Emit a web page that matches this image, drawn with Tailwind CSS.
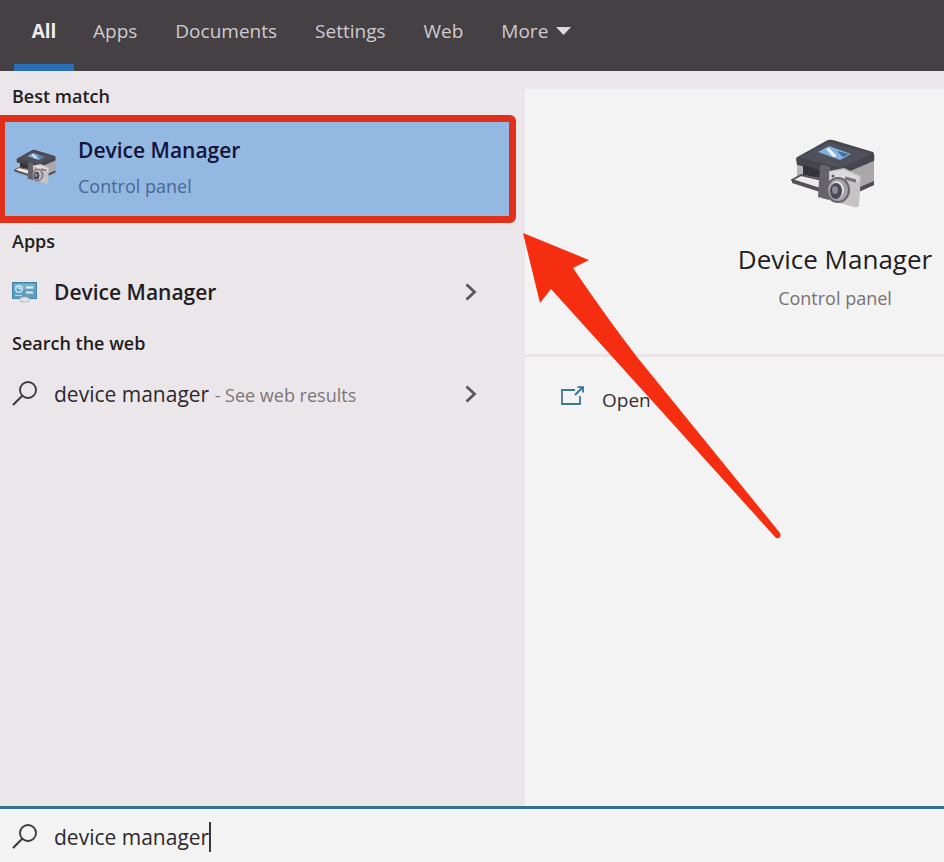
<!DOCTYPE html>
<html lang="en">
<head>
    <meta charset="UTF-8">
    <meta name="viewport" content="width=device-width, initial-scale=1.0">
    <title>Search</title>
    <script src="https://cdn.jsdelivr.net/npm/@tailwindcss/browser@4"></script>
</head>
<body class="relative flex flex-col min-h-screen overflow-x-hidden bg-[#ebe6ea] text-[#1f1d20] font-['Open_Sans','Noto_Sans',sans-serif]">

    <!-- Shared icons -->
    <svg class="hidden">
        <symbol id="printer" viewBox="0 0 88 74">
            <path d="M6 26 L50 36 L50 60 L6 44Z" fill="#b9b5b8"/>
            <path d="M50 35 L83 22 L83 46 L50 61Z" fill="#aaa6aa"/>
            <path d="M50 56 L83 42 L83 46 L50 61Z" fill="#4f4c52"/>
            <path d="M5 20 Q5 18 8 17 L35 2 Q38 0 42 1 L82 13 Q84 15 83 22 L52 35 Q50 36 47 35 L6 26Z" fill="#45464f"/>
            <path d="M8 18 L38 3 L81 15 L50 29Z" fill="#50515a"/>
            <path d="M27 13 L38 7 L60 15 L49 21Z" fill="#83b0dd"/>
            <path d="M35 10 L38 9 L46 17 L42 18Z" fill="#e8f3fb"/>
            <path d="M46 12 L58 15 L52 18Z" fill="#3f6f9c"/>
            <path d="M12 26 L29 31 L29 39 L12 36Z" fill="#353239"/>
            <path d="M1 41 L10 36 L36 42 L29 50Z" fill="#ece9eb" stroke="#555158" stroke-width="2"/>
            <path d="M1 41 L29 50 L29 53 L1 44Z" fill="#555158"/>
            <path d="M29 27 Q31 25 34 26 L39 28 L38 61 L27 58Z" fill="#66636a"/>
            <path d="M38 32 L53 29 L70 37 L68 67 Q67 69 63 68 L38 61Z" fill="#c7c3c5"/>
            <path d="M39 33 L53 31 L68 38 L68 43 L51 39 L39 40Z" fill="#dedadb"/>
            <path d="M54 39 L65 42" stroke="#737078" stroke-width="3"/>
            <ellipse cx="47" cy="51" rx="11" ry="12" fill="#a5a1a6" stroke="#68646b" stroke-width="2"/>
            <ellipse cx="46" cy="51" rx="7" ry="9" fill="#dfdcde"/>
            <ellipse cx="45" cy="52" rx="6" ry="8" fill="#4a4a54"/>
            <ellipse cx="44" cy="51" rx="3" ry="4" fill="#8a8b96"/>
            <circle cx="42" cy="37" r="1.5" fill="#5c5960"/>
        </symbol>
        <symbol id="search" viewBox="0 0 26 26">
            <circle cx="16" cy="9" r="8" fill="none" stroke="currentColor" stroke-width="1.9"/>
            <path d="M10.3 14.8 L1 24" fill="none" stroke="currentColor" stroke-width="2.1"/>
        </symbol>
        <symbol id="chevron" viewBox="0 0 12 18">
            <path d="M1.5 1.5 L9.5 9 L1.5 16.5" fill="none" stroke="currentColor" stroke-width="2.8"/>
        </symbol>
    </svg>

    <!-- Filter tabs -->
    <nav class="flex h-[71px] shrink-0 bg-[#454044] pl-[14px] text-[19px] leading-7 text-[#d0cbce]">
        <button class="w-[60px] border-b-[7px] border-[#2a6eb5] pb-[3px] font-bold text-[#f0edef]">All</button>
        <button class="px-[19px] pb-[10px]">Apps</button>
        <button class="px-[19px] pb-[10px]">Documents</button>
        <button class="px-[19px] pb-[10px]">Settings</button>
        <button class="px-[19px] pb-[10px]">Web</button>
        <button class="flex items-center gap-2 px-[19px] pb-[10px]">More
            <svg class="h-2 w-[15px]" viewBox="0 0 15 8"><path d="M0 0H15L7.5 8Z" fill="#dfdbdd"/></svg>
        </button>
    </nav>

    <main class="flex flex-1">
        <!-- Results -->
        <section class="w-[525px] shrink-0">
            <h2 class="flex h-11 items-center px-3 pt-1.5 text-[18px] font-semibold">Best match</h2>
            <button class="flex h-[108px] w-[516px] items-center rounded-r-md border-[7px] border-l-[5px] border-[#e0301a] bg-[#93b8e1] pb-0.5 pl-[9px] text-left">
                <svg class="h-10 w-[44px]"><use href="#printer"/></svg>
                <span class="ml-5 flex flex-col gap-2">
                    <span class="text-[21px] leading-7 font-semibold text-[#14133a]">Device Manager</span>
                    <span class="text-[18px] leading-7 text-[#4a6795]">Control panel</span>
                </span>
            </button>
            <h2 class="flex h-9 items-center px-3 text-[18px] font-semibold">Apps</h2>
            <button class="flex h-[66px] w-[516px] items-center px-3 text-left">
                <svg class="h-[22px] w-[25px]" viewBox="0 0 25 22">
                    <rect x="0.5" y="1.5" width="24" height="16" fill="#5f9fbd" stroke="#4386a6"/>
                    <rect x="2" y="3" width="21" height="5" fill="#78b4cd"/>
                    <circle cx="7" cy="8" r="3.3" fill="none" stroke="#c9e5ef" stroke-width="1.4"/>
                    <path d="M7 8V4.7M7 8H10" stroke="#e4f3f8"/>
                    <path d="M14 6.5H21M14 11.5H21" stroke="#e2f2f8" stroke-width="2"/>
                    <path d="M3 14.5H10" stroke="#b7dce9"/>
                    <ellipse cx="12.5" cy="18.5" rx="5" ry="2.5" fill="#e0e3e8" stroke="#a0adb8" stroke-width="0.8"/>
                </svg>
                <span class="ml-[17px] flex-1 text-[21px] leading-7 font-semibold">Device Manager</span>
                <svg class="mr-[27px] h-[18px] w-3 text-[#5c575b]"><use href="#chevron"/></svg>
            </button>
            <h2 class="flex h-9 items-center px-3 text-[18px] font-semibold">Search the web</h2>
            <button class="flex h-[66px] w-[516px] items-center px-3 text-left">
                <svg class="size-[26px] text-[#3e3a3e]"><use href="#search"/></svg>
                <span class="ml-4 flex-1 text-[21px] leading-7 text-[#2c292c]">device manager <span class="text-[18px] text-[#7c777b]">- See web results</span></span>
                <svg class="mr-[27px] h-[18px] w-3 text-[#5c575b]"><use href="#chevron"/></svg>
            </button>
        </section>

        <!-- Preview pane, runs past the right edge -->
        <section class="flex-1 overflow-hidden pt-[18px]">
            <div class="flex h-full min-w-[620px] flex-col bg-[#f3f3f3]">
                <div class="flex h-[268px] flex-col items-center border-b-[3px] border-[#e9e5e8] pt-[50px]">
                    <svg class="h-[74px] w-[88px]"><use href="#printer"/></svg>
                    <h1 class="mt-7 text-[26px] leading-9">Device Manager</h1>
                    <p class="mt-[7px] text-[18px] leading-7 text-[#767276]">Control panel</p>
                </div>
                <button class="flex items-center px-9 pt-[27px] text-left text-[19px] leading-8 text-[#333034]">
                    <svg class="mb-2 h-5 w-6" viewBox="0 0 24 20" fill="none" stroke="#417992" stroke-width="1.8">
                        <path d="M14 4H1V18H19V10"/>
                        <path d="M14 9L22 1M16.5 1.2H22V6.5" stroke="#38719b"/>
                    </svg>
                    <span class="ml-[17px]">Open</span>
                </button>
            </div>
        </section>
    </main>

    <!-- Search box -->
    <label class="flex h-14 shrink-0 items-center border-t-[3px] border-[#34718c] bg-[#f4f3f4] px-3 pt-0.5">
        <svg class="size-[26px] text-[#3e3a3e]"><use href="#search"/></svg>
        <input type="text" value="device manager" aria-label="Search" class="ml-4 field-sizing-content text-[21px] leading-8 text-[#2c292c] outline-none">
        <span class="h-[30px] w-[2px] bg-[#3a373a]"></span>
    </label>

    <!-- Pointer arrow -->
    <svg class="pointer-events-none absolute top-[232px] left-[522px] h-[308px] w-[260px]" viewBox="0 0 260 308">
        <path d="M1 1 L67 28 L51 36 Q85 86 115 125 L258 301 Q260 307 254 306 L29 57 L18 71Z" fill="#f52e11"/>
    </svg>
</body>
</html>
